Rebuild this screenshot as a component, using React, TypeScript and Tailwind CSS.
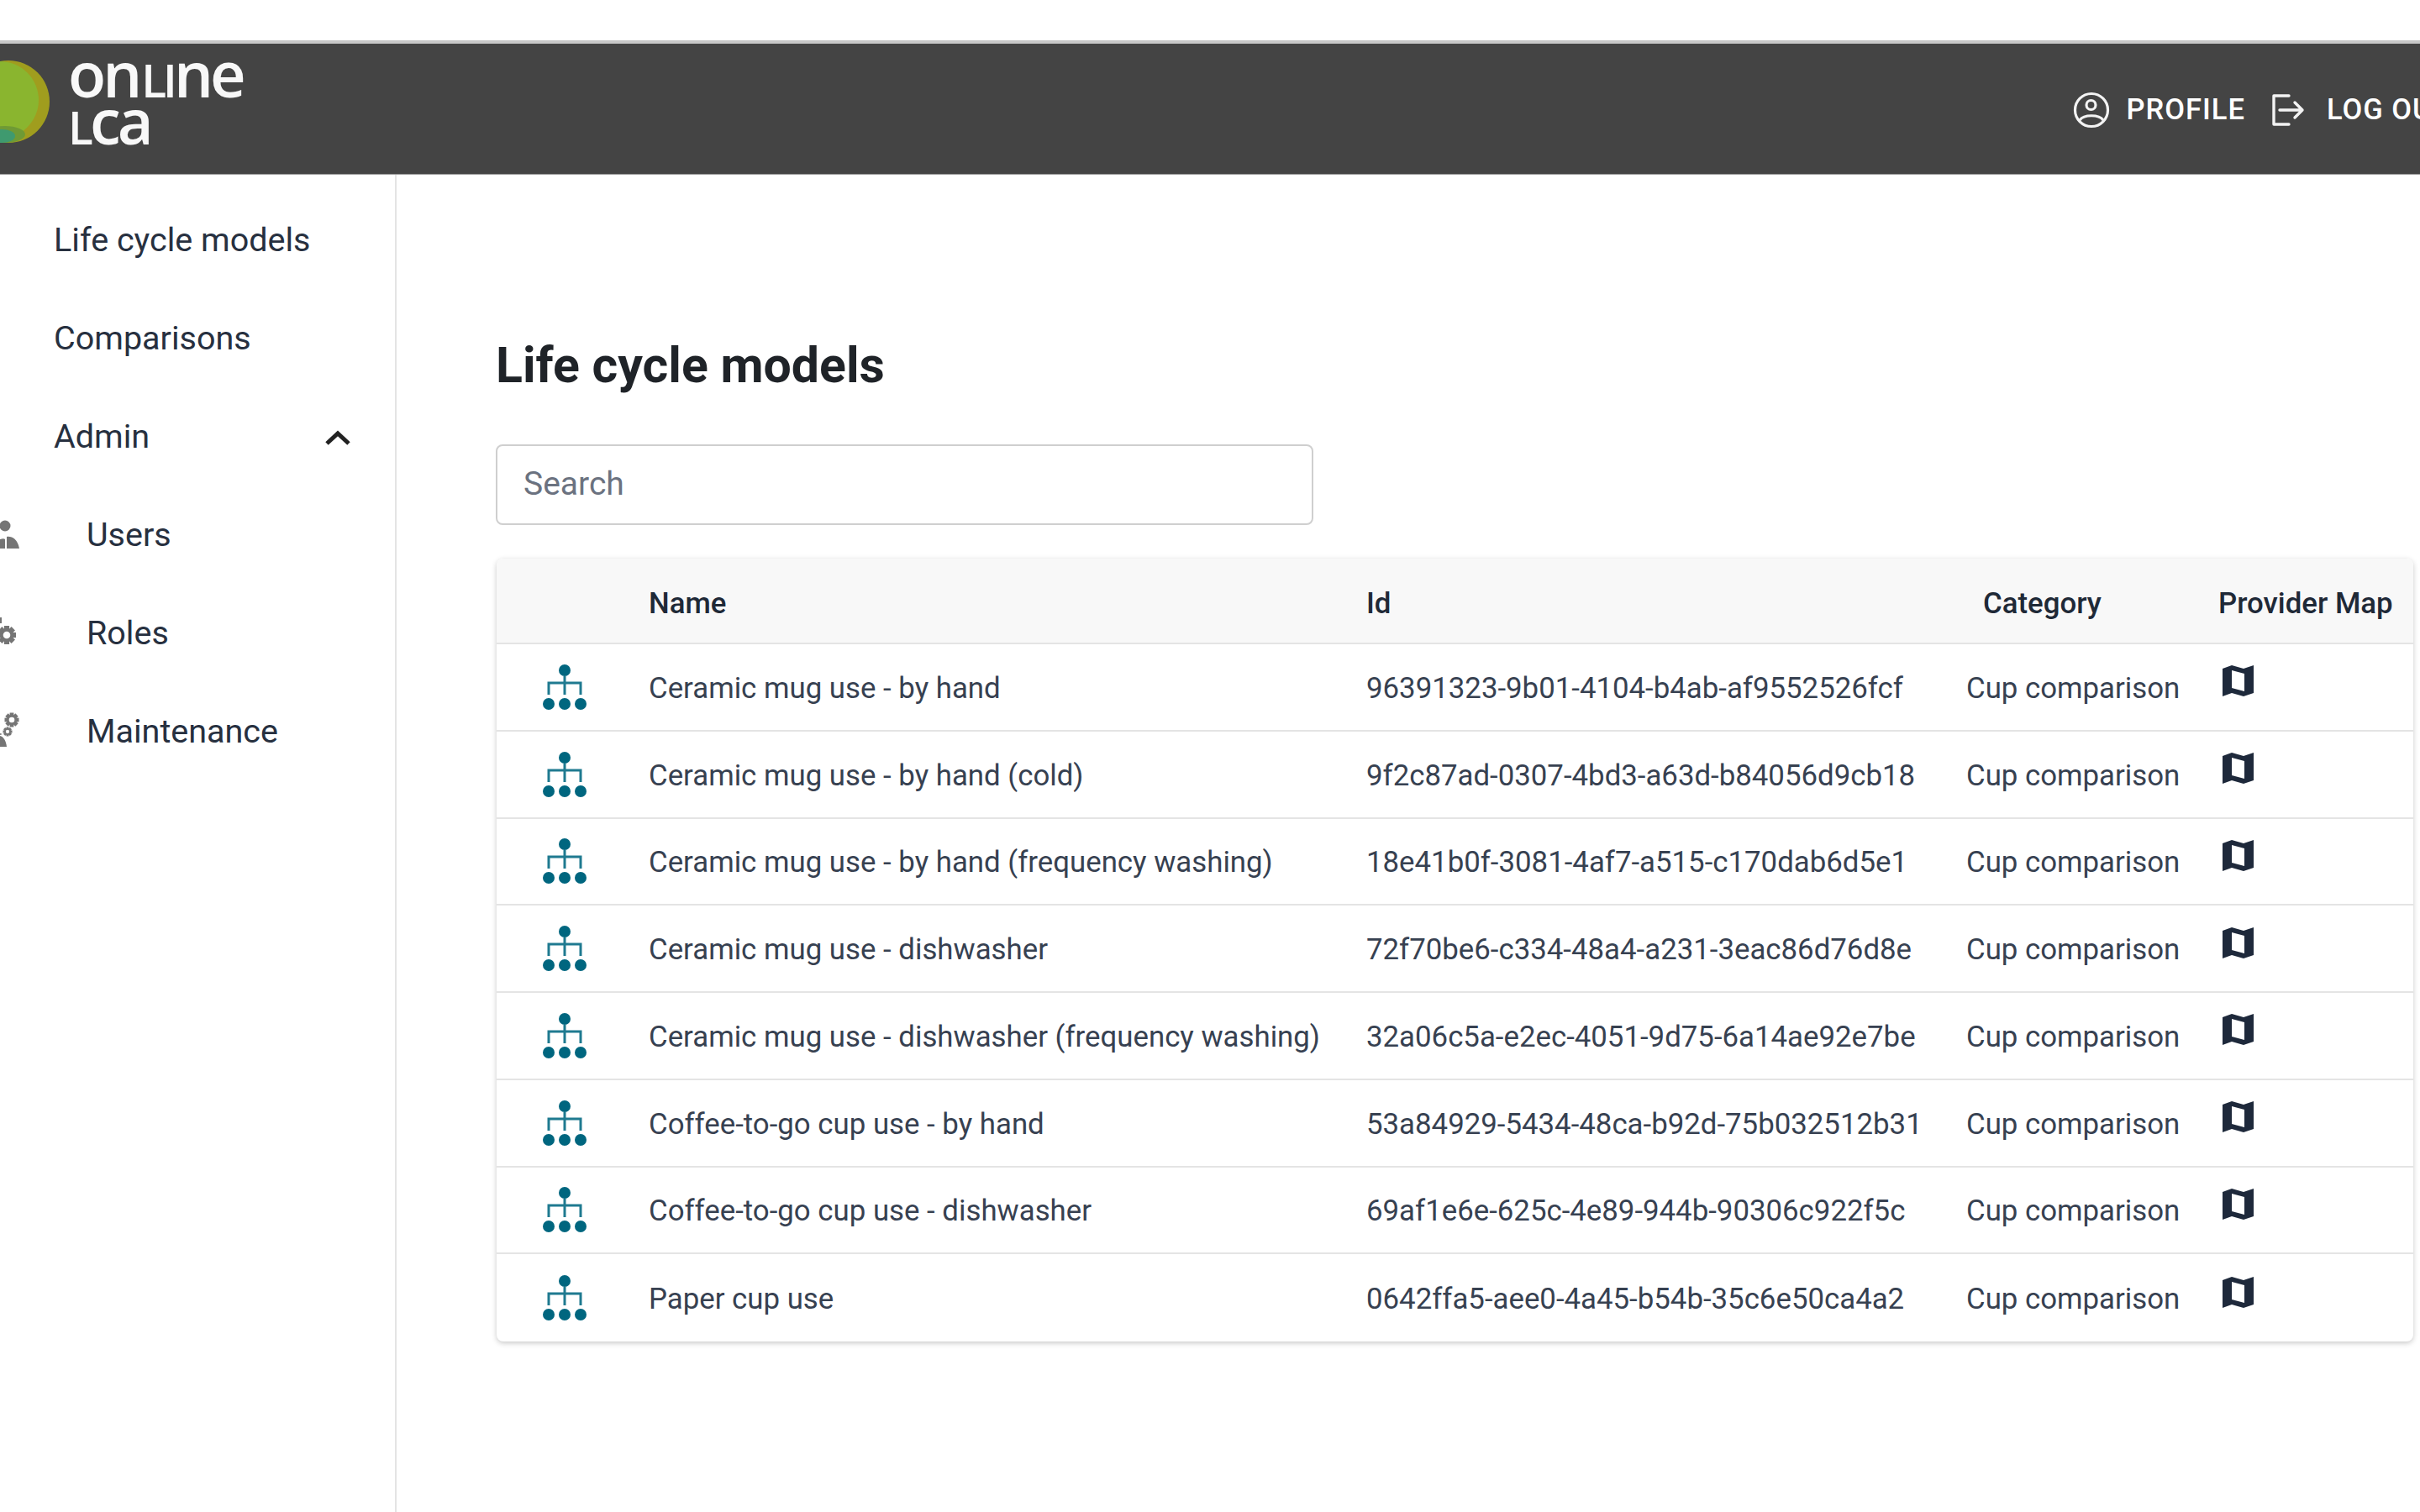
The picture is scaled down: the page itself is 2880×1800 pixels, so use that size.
import React from "react";

const rows = [
  ["Ceramic mug use - by hand", "96391323-9b01-4104-b4ab-af9552526fcf"],
  ["Ceramic mug use - by hand (cold)", "9f2c87ad-0307-4bd3-a63d-b84056d9cb18"],
  ["Ceramic mug use - by hand (frequency washing)", "18e41b0f-3081-4af7-a515-c170dab6d5e1"],
  ["Ceramic mug use - dishwasher", "72f70be6-c334-48a4-a231-3eac86d76d8e"],
  ["Ceramic mug use - dishwasher (frequency washing)", "32a06c5a-e2ec-4051-9d75-6a14ae92e7be"],
  ["Coffee-to-go cup use - by hand", "53a84929-5434-48ca-b92d-75b032512b31"],
  ["Coffee-to-go cup use - dishwasher", "69af1e6e-625c-4e89-944b-90306c922f5c"],
  ["Paper cup use", "0642ffa5-aee0-4a45-b54b-35c6e50ca4a2"],
];

function Gear({ cx, cy, r, color = "#757575" }: { cx: number; cy: number; r: number; color?: string }) {
  const teeth = [0, 45, 90, 135, 180, 225, 270, 315];
  return (
    <g>
      {teeth.map((a) => (
        <rect key={a} x={cx - r * 0.28} y={cy - r} width={r * 0.56} height={r * 0.5} fill={color} transform={`rotate(${a} ${cx} ${cy})`} />
      ))}
      <circle cx={cx} cy={cy} r={r * 0.55} fill="none" stroke={color} strokeWidth={r * 0.32} />
    </g>
  );
}

function UsersIcon() {
  return (
    <svg width="24" height="40" viewBox="0 0 24 40" className="shrink-0">
      <circle cx="6" cy="9" r="6.5" fill="#757575" />
      <path d="M8 36 V22 C14 21 21 25 23 36 Z" fill="#757575" />
      <path d="M0 36 V25 C3 24 5 24 6 25 V36 Z" fill="#757575" />
    </svg>
  );
}

function RolesIcon() {
  return (
    <svg width="24" height="40" viewBox="0 0 24 40" className="shrink-0">
      <path d="M0 1 H2 V8 H0 Z" fill="#757575" />
      <Gear cx={8} cy={22} r={11} />
    </svg>
  );
}

function MaintIcon() {
  return (
    <svg width="24" height="48" viewBox="0 0 24 48" className="shrink-0">
      <Gear cx={14} cy={10} r={8.5} />
      <Gear cx={9} cy={24} r={5.5} />
      <path d="M0 26 L0 28 L3 27 Z" fill="#757575" />
      <path d="M0 29 C4 30 7 34 8 42 H0 Z" fill="#757575" />
    </svg>
  );
}

function HierarchyIcon() {
  return (
    <svg width="52" height="56" viewBox="0 0 52 56" className="shrink-0">
      <circle cx="26" cy="7" r="7" fill="#00667f" />
      <circle cx="7" cy="47" r="7" fill="#00667f" />
      <circle cx="26" cy="47" r="7" fill="#00667f" />
      <circle cx="45" cy="47" r="7" fill="#00667f" />
      <path d="M7 36 V22 H45 V36 M26 14 V36" fill="none" stroke="#1f7a90" strokeWidth="3" />
    </svg>
  );
}

function MapIcon() {
  return (
    <svg width="37" height="37" viewBox="0 0 37 37" className="shrink-0">
      <path d="M0 4 L11 0 L25 4 L37 0 V33 L25 37 L11 33 L0 37 Z" fill="#1e293b" />
      <path d="M11 6 L26 10 V31 L11 27 Z" fill="#fff" />
    </svg>
  );
}

function ProfileIcon() {
  return (
    <svg width="44" height="44" viewBox="0 0 44 44" className="shrink-0" fill="none" stroke="#f3f3f3" strokeWidth="3.2">
      <circle cx="22" cy="22" r="19.5" />
      <circle cx="21.5" cy="16" r="5.5" />
      <path d="M8 34 C13 27 31 27 36 34" />
    </svg>
  );
}

function LogoutIcon() {
  return (
    <svg width="40" height="38" viewBox="0 0 40 38" className="shrink-0" fill="none" stroke="#f3f3f3" strokeWidth="3.4" strokeLinecap="round" strokeLinejoin="round">
      <path d="M21 2 H3 V36 H21" />
      <path d="M10 19 H37 M28 10 L37 19 L28 28" />
    </svg>
  );
}

function LogoMark() {
  return (
    <svg width="59" height="98" viewBox="0 0 59 98" className="mb-[18px] shrink-0">
      <circle cx="10" cy="49" r="49" fill="#a09d1e" />
      <circle cx="0" cy="47" r="46" fill="#8ab52f" />
      <ellipse cx="6" cy="88" rx="24" ry="10" fill="#6f9a35" />
      <ellipse cx="2" cy="90" rx="16" ry="8" fill="#3f9a6f" />
    </svg>
  );
}

function NavRow({ icon, label }: { icon?: React.ReactNode; label: string }) {
  return (
    <div className="flex h-[117px] items-center text-[39.5px] text-[#27303f]">
      {icon ? (
        <>
          <div className="flex w-[103px] shrink-0 items-center">{icon}</div>
          <span>{label}</span>
        </>
      ) : (
        <span className="pl-[64px]">{label}</span>
      )}
    </div>
  );
}

export default function App() {
  return (
    <div className="flex h-[1800px] w-[2880px] flex-col overflow-hidden bg-white font-['Roboto',sans-serif]">
      <div className="h-[52px] shrink-0 border-b-[4px] border-[#c8c8c8]" />
      <header className="flex h-[156px] shrink-0 items-center border-b border-[#999] bg-[#444444] text-white">
        <LogoMark />
        <div className="mb-[28px] ml-[22px] flex flex-col font-['Open_Sans',sans-serif] font-semibold tracking-[-4px] text-[#f8f8f8]">
          <div className="flex h-[56px] items-baseline leading-none">
            <span className="text-[74px] leading-[56px]">on</span>
            <span className="ml-[3px] text-[55px] leading-[56px]">L</span>
            <span className="text-[55px] leading-[56px]">I</span>
            <span className="text-[74px] leading-[56px]">ne</span>
          </div>
          <div className="flex h-[56px] items-baseline leading-none">
            <span className="text-[55px] leading-[56px]">L</span>
            <span className="text-[74px] leading-[56px]">ca</span>
          </div>
        </div>
        <div className="ml-[2178px] mt-[2px] flex shrink-0 items-center">
          <ProfileIcon />
          <span className="ml-[20px] text-[34.5px] font-medium tracking-[1px]">PROFILE</span>
          <span className="ml-[31px]"><LogoutIcon /></span>
          <span className="ml-[26px] whitespace-nowrap text-[34.5px] font-medium tracking-[1px]">LOG OUT</span>
        </div>
      </header>
      <div className="flex min-h-0 flex-1">
        <aside className="w-[472px] shrink-0 border-r-2 border-[#e4e4e4] pt-[19px]">
          <NavRow label="Life cycle models" />
          <NavRow label="Comparisons" />
          <div className="relative">
            <NavRow label="Admin" />
            <svg width="32" height="20" viewBox="0 0 32 20" className="absolute left-[386px] top-[50px]" fill="none" stroke="#222" strokeWidth="5">
              <path d="M3 17 L16 5 L29 17" />
            </svg>
          </div>
          <NavRow icon={<UsersIcon />} label="Users" />
          <NavRow icon={<RolesIcon />} label="Roles" />
          <NavRow icon={<MaintIcon />} label="Maintenance" />
        </aside>
        <main className="min-w-0 flex-1 pl-[118px]">
          <h1 className="mt-[191px] h-[72px] text-[59px] font-bold leading-[72px] text-[#1f2328]">Life cycle models</h1>
          <div className="mt-[58px] flex h-[96px] w-[973px] items-center rounded-[8px] border-2 border-[#cfcfcf] pb-[2px] pl-[31px] text-[39px] text-[#6b7280]">Search</div>
          <div className="ml-[1px] mt-[40px] w-[2281px] overflow-hidden rounded-[8px] text-[34.8px] shadow-[0_2px_6px_rgba(0,0,0,0.22)]">
            <div className="grid h-[102px] grid-cols-[181px_854px_714px_300px_1fr] items-center border-b-2 border-[#e4e4e4] bg-[#f8f8f8] pt-[6px] font-medium text-[#1f2937]">
              <div />
              <div>Name</div>
              <div>Id</div>
              <div className="pl-[20px]">Category</div>
              <div>Provider Map</div>
            </div>
            {rows.map(([name, id], i) => (
              <div key={id} className={`grid h-[103.75px] grid-cols-[181px_854px_714px_300px_1fr] items-center text-[#374151] ${i < rows.length - 1 ? "border-b-2 border-[#e4e4e4]" : ""}`}>
                <div className="flex pl-[55px] pt-[2px]"><HierarchyIcon /></div>
                <div className="whitespace-nowrap pt-[2px]">{name}</div>
                <div className="whitespace-nowrap pt-[2px]">{id}</div>
                <div className="whitespace-nowrap pt-[2px]">Cup comparison</div>
                <div className="pb-[14px] pl-[5px]"><MapIcon /></div>
              </div>
            ))}
          </div>
        </main>
      </div>
    </div>
  );
}
